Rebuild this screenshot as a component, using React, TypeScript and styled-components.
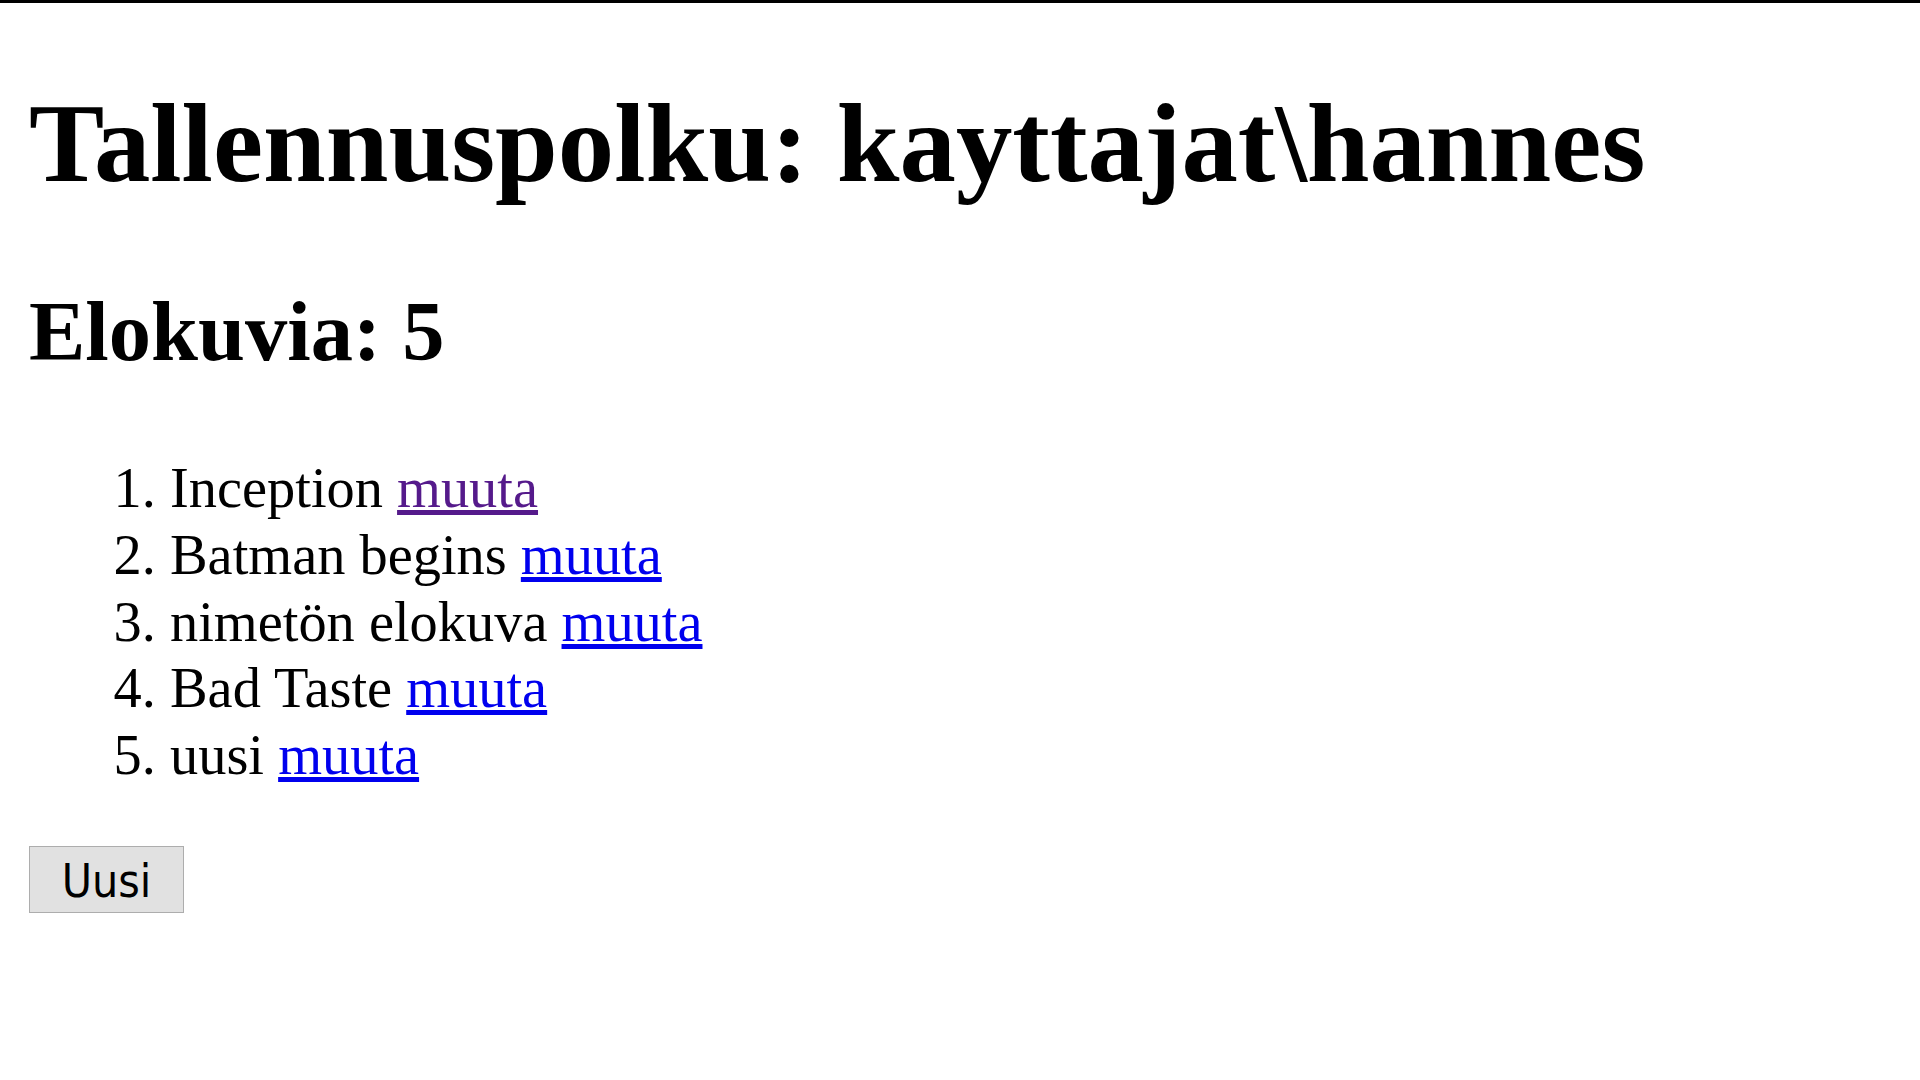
import React from "react";
import styled, { createGlobalStyle } from "styled-components";

const GlobalStyle = createGlobalStyle`
  html, body {
    margin: 0;
    padding: 0;
    background: #ffffff;
  }
  body {
    font-family: "Liberation Serif", "Times New Roman", serif;
    color: #000000;
  }
`;

const Page = styled.main`
  border-top: 3px solid #000000;
  padding: 0 29px;
  display: flex;
  flex-direction: column;
  align-items: flex-start;
`;

const Title = styled.h1`
  margin: 76px 0 0;
  font-size: 112.8px;
  line-height: 128px;
  font-weight: 700;
`;

const Subtitle = styled.h2`
  margin: 77px 0 0;
  font-size: 84.5px;
  line-height: 96px;
  font-weight: 700;
`;

const MovieList = styled.ol`
  margin: 75px 0 0;
  padding-left: 141px;
  font-size: 56.4px;
  line-height: 66.75px;
  list-style: decimal outside;
`;

const MovieItem = styled.li``;

const EditLink = styled.a<{ $visited?: boolean }>`
  color: ${(p) => (p.$visited ? "#551a8b" : "#0000ee")};
  text-decoration: underline;
  cursor: pointer;
`;

const NewButton = styled.button`
  margin-top: 57px;
  width: 155px;
  height: 67px;
  padding: 4px 0 0;
  border: 1px solid #adadad;
  background: #e1e1e1;
  color: #000000;
  font-family: "DejaVu Sans Condensed", "Lato", sans-serif;
  font-size: 46px;
  display: flex;
  align-items: center;
  justify-content: center;
  cursor: pointer;
`;

const movies = [
  { name: "Inception", visited: true },
  { name: "Batman begins", visited: false },
  { name: "nimetön elokuva", visited: false },
  { name: "Bad Taste", visited: false },
  { name: "uusi", visited: false },
];

export default function App() {
  return (
    <>
      <GlobalStyle />
      <Page>
        <Title>Tallennuspolku: kayttajat\hannes</Title>
        <Subtitle>Elokuvia: {movies.length}</Subtitle>
        <MovieList>
          {movies.map((m, i) => (
            <MovieItem key={i}>
              {m.name}{" "}
              <EditLink href="#" $visited={m.visited} onClick={(e) => e.preventDefault()}>
                muuta
              </EditLink>
            </MovieItem>
          ))}
        </MovieList>
        <NewButton>Uusi</NewButton>
      </Page>
    </>
  );
}
